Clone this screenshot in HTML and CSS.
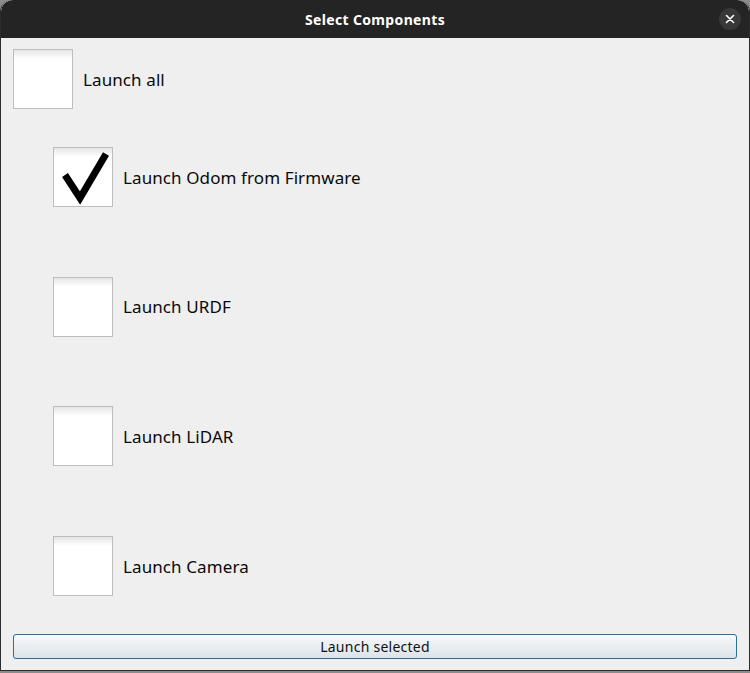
FILE: index.html
```html
<!DOCTYPE html>
<html>
<head>
<meta charset="utf-8">
<link rel="stylesheet" href="styles.css">
</head>
<body>
<div class="window">
  <div class="titlebar">
    <span class="title">Select Components</span>
    <span class="close"><svg width="10" height="10" viewBox="0 0 10 10"><path d="M1.5 1.5 L8.5 8.5 M8.5 1.5 L1.5 8.5" stroke="#fff" stroke-width="1.6" stroke-linecap="round"/></svg></span>
  </div>
  <div class="content">
    <div class="row">
      <span class="box"></span>
      <span class="label">Launch all</span>
    </div>
    <div class="sublist">
      <div class="row">
        <span class="box"><svg class="check" width="58" height="58" viewBox="0 0 58 58"><path d="M11 27 L26 50 L52 6" fill="none" stroke="#000" stroke-width="7" stroke-linejoin="miter"/></svg></span>
        <span class="label">Launch Odom from Firmware</span>
      </div>
      <div class="row">
        <span class="box"></span>
        <span class="label">Launch URDF</span>
      </div>
      <div class="row">
        <span class="box"></span>
        <span class="label">Launch LiDAR</span>
      </div>
      <div class="row">
        <span class="box"></span>
        <span class="label">Launch Camera</span>
      </div>
    </div>
    <div class="spacer"></div>
    <button class="launch">Launch selected</button>
  </div>
</div>
<div class="below"></div>
</body>
</html>
```
FILE: styles.css
```css
html, body {
  margin: 0;
  padding: 0;
  background: #8c8c8c;
  width: 750px;
  height: 673px;
  overflow: hidden;
}
.window {
  box-sizing: border-box;
  width: 750px;
  height: 671px;
  background: #efefef;
  border: 1px solid #2b2b2b;
  border-top: none;
  border-radius: 12px 12px 0 0;
  display: flex;
  flex-direction: column;
  overflow: hidden;
  font-family: "Noto Sans", "DejaVu Sans", sans-serif;
}
.titlebar {
  height: 38px;
  flex: none;
  background: #242424;
  display: flex;
  align-items: center;
  justify-content: center;
  position: relative;
  border-radius: 12px 12px 0 0;
}
.title {
  color: #ffffff;
  font-weight: bold;
  font-size: 14px;
  letter-spacing: 0.35px;
}
.close {
  position: absolute;
  right: 8px;
  top: 8px;
  width: 22px;
  height: 22px;
  border-radius: 50%;
  background: #383838;
  display: flex;
  align-items: center;
  justify-content: center;
}
.content {
  flex: 1;
  display: flex;
  flex-direction: column;
  padding: 11px 12px 11px 12px;
}
.row {
  display: flex;
  align-items: center;
  height: 60px;
}
.box {
  box-sizing: border-box;
  width: 60px;
  height: 60px;
  flex: none;
  border: 1px solid #bdbdbd;
  background: linear-gradient(#e6e6e6 0px, #ffffff 9px, #ffffff 100%);
  position: relative;
}
.check {
  position: absolute;
  left: 0;
  top: 0;
}
.label {
  margin-left: 10px;
  font-size: 17px;
  color: #0a0a0a;
  letter-spacing: 0.1px;
}
.sublist {
  margin-top: 38px;
  padding-left: 40px;
  display: flex;
  flex-direction: column;
  gap: 69.7px;
}
.spacer {
  flex: 1;
}
.launch {
  height: 25px;
  width: 100%;
  box-sizing: border-box;
  border: 1px solid #2f6f9f;
  border-radius: 3px;
  background: linear-gradient(#f7f9fb, #dce3e8);
  font-family: "Noto Sans", "DejaVu Sans", sans-serif;
  font-size: 14px;
  color: #111;
  padding: 0;
  letter-spacing: 0.25px;
}
.below {
  height: 2px;
  background: #8c8c8c;
}
```
